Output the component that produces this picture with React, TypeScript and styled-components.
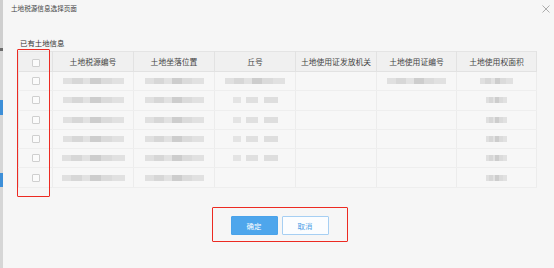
import React from 'react';
import styled, { createGlobalStyle } from 'styled-components';

const GlobalStyle = createGlobalStyle`
	html, body {
		margin: 0;
		padding: 0;
		background: #f6f6f6;
	}
	body {
		font-family: "Noto Sans CJK SC", "Noto Sans", sans-serif;
		color: #333;
	}
`;

const Page = styled.div`
	display: flex;
	width: 554px;
	height: 268px;
	overflow: hidden;
	background: #f6f6f6;
`;

const EdgeStrip = styled.div`
	width: 3px;
	flex-shrink: 0;
	background: linear-gradient(
		to bottom,
		#cfcfcf 0,
		#cfcfcf 48px,
		#6b6b6b 48px,
		#6b6b6b 51px,
		#d6d6d6 51px,
		#d6d6d6 100px,
		#3d8fd8 100px,
		#3d8fd8 115px,
		#d6d6d6 115px,
		#d6d6d6 173px,
		#3d8fd8 173px,
		#3d8fd8 187px,
		#d6d6d6 187px
	);
`;

const Dialog = styled.div`
	flex: 1;
	display: flex;
	flex-direction: column;
`;

const TitleBar = styled.div`
	display: flex;
	justify-content: space-between;
	align-items: center;
	height: 16px;
	padding: 0 4px 0 8px;
`;

const Title = styled.span`
	font-size: 6.6px;
	color: #444;
`;

const Close = styled.svg`
	width: 8px;
	height: 8px;
	margin-top: 2px;
`;

const Body = styled.div`
	padding: 22px 15px 0 15px;
	display: flex;
	flex-direction: column;
`;

const SectionLabel = styled.div`
	font-size: 7.4px;
	line-height: 10px;
	height: 10px;
	color: #333;
	padding-left: 2px;
	margin-bottom: 3px;
`;

const TableWrap = styled.div`
	position: relative;
	width: 518px;
`;

const Marker = styled.div`
	position: absolute;
	left: -1px;
	top: -2px;
	width: 33px;
	height: 148px;
	box-sizing: border-box;
	border: 1.5px solid #ec2a22;
	border-radius: 1px;
	pointer-events: none;
`;

const Table = styled.table`
	width: 518px;
	border-collapse: collapse;
	table-layout: fixed;
	border: 1px solid #e4e4e4;
`;

const HeadCell = styled.th<{ $w: number }>`
	width: ${(p) => p.$w}px;
	height: 19px;
	padding: 0;
	font-size: 7.8px;
	font-weight: normal;
	color: #444;
	text-align: center;
	white-space: nowrap;
	border-right: 1px solid #e2e2e2;
	border-bottom: 1px solid #e2e2e2;
	background-color: #f0f0f0;
	background-image: radial-gradient(#e6e6e6 0.5px, transparent 0.6px);
	background-size: 2px 2px;
`;

const Cell = styled.td`
	height: 18.3px;
	padding: 0;
	text-align: center;
	border-right: 1px solid #ececec;
	border-bottom: 1px solid #eeeeee;
	background: #f7f7f7;
	line-height: 0;
`;

const Check = styled.span`
	display: inline-block;
	width: 6px;
	height: 6px;
	border: 1px solid #cfcfcf;
	border-radius: 1px;
	background: #fbfbfb;
	vertical-align: middle;
`;

const Blur = styled.span<{ $w: number; $tone?: 'dark' | 'light' }>`
	display: inline-block;
	width: ${(p) => p.$w}px;
	height: 6px;
	vertical-align: middle;
	filter: blur(0.5px);
	background: ${(p) =>
		p.$tone === 'light'
			? 'linear-gradient(90deg, #e4e4e4 0 18%, transparent 18% 30%, #e0e0e0 30% 55%, transparent 55% 68%, #dedede 68% 100%)'
			: 'linear-gradient(90deg, #e0e0e0 0 15%, #d7d7d7 15% 32%, #e2e2e2 32% 45%, #cdcdcd 45% 62%, #dbdbdb 62% 80%, #e1e1e1 80% 100%)'};
`;

const Footer = styled.div`
	display: flex;
	justify-content: center;
	margin-top: 19px;
	padding-left: 2px;
`;

const ButtonGroup = styled.div`
	display: flex;
	gap: 4px;
	padding: 8px 18px 6px 18px;
	border: 1.5px solid #ec2a22;
	border-radius: 1px;
`;

const Button = styled.button<{ $primary?: boolean }>`
	width: 47px;
	height: 19px;
	padding: 0;
	font-family: "Noto Sans CJK SC", "Noto Sans", sans-serif;
	font-size: 7.4px;
	border-radius: 1px;
	border: 1px solid ${(p) => (p.$primary ? '#4aa3ea' : '#a6cff3')};
	background: ${(p) => (p.$primary ? '#4ea6ec' : '#fbfdff')};
	color: ${(p) => (p.$primary ? '#ffffff' : '#4f9fe6')};
`;

// widths are content widths; the collapsed borders add one pixel to each
const columns = [
	{ title: '', w: 33 },
	{ title: '土地税源编号', w: 80 },
	{ title: '土地坐落位置', w: 80 },
	{ title: '丘号', w: 80 },
	{ title: '土地使用证发放机关', w: 80 },
	{ title: '土地使用证编号', w: 79 },
	{ title: '土地使用权面积', w: 79 },
];

// widths of the blurred values per column, 0 = empty cell
const rows: number[][] = [
	[61, 59, 60, 0, 59, 33],
	[61, 59, 45, 0, 0, 21],
	[61, 59, 45, 0, 0, 21],
	[61, 59, 45, 0, 0, 21],
	[63, 59, 45, 0, 0, 21],
	[63, 59, 0, 0, 0, 21],
];

export default function App(): JSX.Element {
	return (
		<Page>
			<GlobalStyle />
			<EdgeStrip />
			<Dialog>
				<TitleBar>
					<Title>土地税源信息选择页面</Title>
					<Close viewBox="0 0 8 8">
						<path d="M0.5 0.5 L7.5 7.5 M7.5 0.5 L0.5 7.5" stroke="#9a9a9a" strokeWidth="0.8" />
					</Close>
				</TitleBar>
				<Body>
					<SectionLabel>已有土地信息</SectionLabel>
					<TableWrap>
						<Table>
							<thead>
								<tr>
									{columns.map((c, i) => (
										<HeadCell key={i} $w={c.w}>
											{i === 0 ? <Check /> : c.title}
										</HeadCell>
									))}
								</tr>
							</thead>
							<tbody>
								{rows.map((r, ri) => (
									<tr key={ri}>
										<Cell>
											<Check />
										</Cell>
										{r.map((w, ci) => (
											<Cell key={ci}>
												{w > 0 && <Blur $w={w} $tone={ci === 2 && ri > 0 ? 'light' : 'dark'} />}
											</Cell>
										))}
									</tr>
								))}
							</tbody>
						</Table>
						<Marker />
					</TableWrap>
					<Footer>
						<ButtonGroup>
							<Button $primary>确定</Button>
							<Button>取消</Button>
						</ButtonGroup>
					</Footer>
				</Body>
			</Dialog>
		</Page>
	);
}
